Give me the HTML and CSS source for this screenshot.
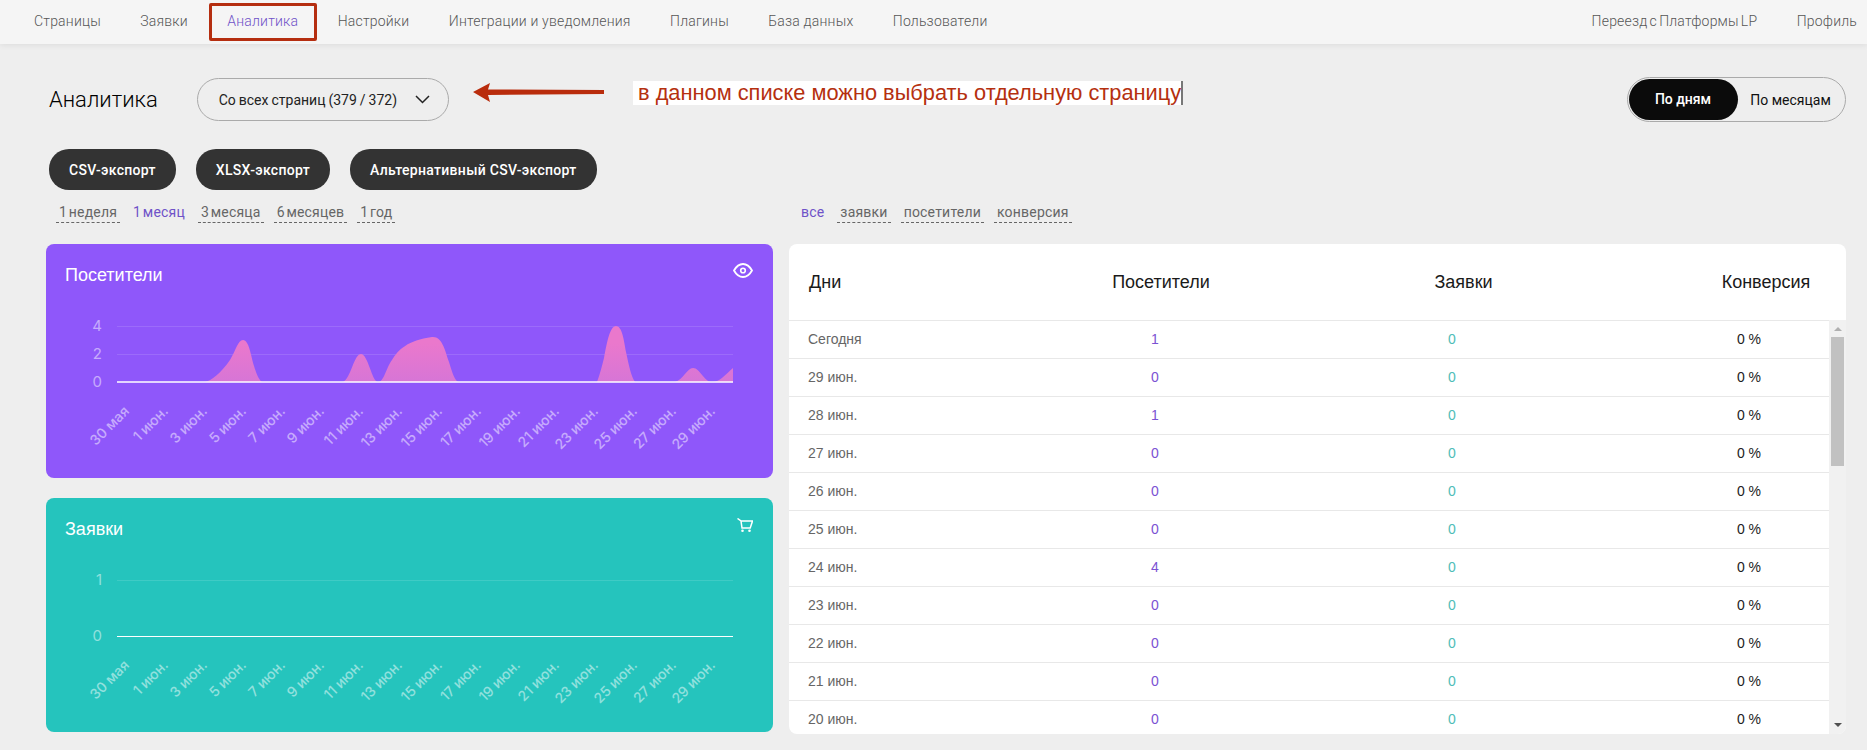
FILE: index.html
```html
<!DOCTYPE html>
<html lang="ru">
  <head>
    <meta charset="UTF-8" />
    <meta name="viewport" content="width=device-width, initial-scale=1.0" />
    <title>Аналитика</title>
    <link rel="stylesheet" href="styles.css">
  </head>
  <body>
    <nav class="nav">
      <a class="nav-item">Страницы</a>
      <a class="nav-item">Заявки</a>
      <a class="nav-item nav-active">Аналитика</a>
      <a class="nav-item">Настройки</a>
      <a class="nav-item">Интеграции и уведомления</a>
      <a class="nav-item">Плагины</a>
      <a class="nav-item">База данных</a>
      <a class="nav-item">Пользователи</a>
      <a class="nav-item nav-right">Переезд с Платформы LP</a>
      <a class="nav-item">Профиль</a>
    </nav>

    <main class="main">
      <div class="toolbar">
        <h1 class="page-title">Аналитика</h1>
        <div class="page-select">
          Со всех страниц (379 / 372)
          <svg class="chevron" width="15" height="9" viewBox="0 0 15 9">
            <path d="M1 1l6.500 6.500L14 1" fill="none" stroke="#222" stroke-width="1.500" />
          </svg>
        </div>
        <div class="toggle">
          <span class="toggle-item toggle-on">По дням</span>
          <span class="toggle-item">По месяцам</span>
        </div>
      </div>

      <div class="exports">
        <button type="button" class="export-button">CSV-экспорт</button>
        <button type="button" class="export-button">XLSX-экспорт</button>
        <button type="button" class="export-button">Альтернативный CSV-экспорт</button>
      </div>

      <div class="filters">
        <div class="filter-group periods">
          <a class="filter">1 неделя</a>
          <a class="filter filter-on">1 месяц</a>
          <a class="filter">3 месяца</a>
          <a class="filter">6 месяцев</a>
          <a class="filter">1 год</a>
        </div>
        <div class="filter-group columns">
          <a class="filter filter-on">все</a>
          <a class="filter">заявки</a>
          <a class="filter">посетители</a>
          <a class="filter">конверсия</a>
        </div>
      </div>

      <div class="content">
        <div class="charts">
          <section class="card card-purple">
            <header class="card-head">
              <h2 class="card-title">Посетители</h2>
              <svg class="eye-icon" width="20" height="15" viewBox="0 0 20 15">
                <path d="M1 7.500C3.500 3 6.500 1 10 1s6.500 2 9 6.500C16.500 12 13.500 14 10 14S3.500 12 1 7.500z" fill="none" stroke="#fff" stroke-width="1.800" />
                <circle cx="10" cy="7.500" r="2.300" fill="none" stroke="#fff" stroke-width="1.600" />
              </svg>
            </header>
            <svg class="chart" width="727" height="172" viewBox="0 0 727 172">
              <defs>
                <linearGradient id="pinkFill" x1="0" y1="20" x2="0" y2="76" gradientUnits="userSpaceOnUse">
                  <stop offset="0.300" stop-color="#ea78cc" />
                  <stop offset="1" stop-color="#d775d6" />
                </linearGradient>
              </defs>
              <line class="grid-line" x1="71" y1="20.500" x2="687" y2="20.500" />
              <line class="grid-line" x1="71" y1="48.500" x2="687" y2="48.500" />
              <path fill="url(#pinkFill)" d="M159 76C165 75 175 67 184 54C190 44 192 34 197 34C203 34 205 50 208 60C211 70 214 76 217 76Z" />
              <path fill="url(#pinkFill)" d="M297 76C305 72 308 48 315 48C322 48 326 76 332 76C338 76 340 62 346 54C352 44 362 34 386 31C396 30 399 44 403 56C406 66 409 76 413 76Z" />
              <path fill="url(#pinkFill)" d="M551 76C554 68 556 60 558 52C561 36 564 20 570 20C576 20 578 34 580 46C583 60 585 70 589 76Z" />
              <path fill="url(#pinkFill)" d="M629 76C637 74 641 62 647 62C654 62 658 76 666 76C674 76 680 68 687 62V76Z" />
              <line class="zero-line" x1="71" y1="76" x2="687" y2="76" />
              <text class="y-label" x="56" y="25">4</text>
              <text class="y-label" x="56" y="53">2</text>
              <text class="y-label" x="56" y="81">0</text>
              <text class="x-label" transform="translate(84 106) rotate(-45)">30 мая</text>
              <text class="x-label" transform="translate(123 106) rotate(-45)">1 июн.</text>
              <text class="x-label" transform="translate(162 106) rotate(-45)">3 июн.</text>
              <text class="x-label" transform="translate(201 106) rotate(-45)">5 июн.</text>
              <text class="x-label" transform="translate(240 106) rotate(-45)">7 июн.</text>
              <text class="x-label" transform="translate(279 106) rotate(-45)">9 июн.</text>
              <text class="x-label" transform="translate(318 106) rotate(-45)">11 июн.</text>
              <text class="x-label" transform="translate(357 106) rotate(-45)">13 июн.</text>
              <text class="x-label" transform="translate(397 106) rotate(-45)">15 июн.</text>
              <text class="x-label" transform="translate(436 106) rotate(-45)">17 июн.</text>
              <text class="x-label" transform="translate(475 106) rotate(-45)">19 июн.</text>
              <text class="x-label" transform="translate(514 106) rotate(-45)">21 июн.</text>
              <text class="x-label" transform="translate(553 106) rotate(-45)">23 июн.</text>
              <text class="x-label" transform="translate(592 106) rotate(-45)">25 июн.</text>
              <text class="x-label" transform="translate(631 106) rotate(-45)">27 июн.</text>
              <text class="x-label" transform="translate(670 106) rotate(-45)">29 июн.</text>
            </svg>
          </section>

          <section class="card card-teal">
            <header class="card-head">
              <h2 class="card-title">Заявки</h2>
              <svg class="cart-icon" width="16" height="14" viewBox="0 0 16 14">
                <path d="M0.500 0.500L4 3L5 10H13.200L15.500 3H4" fill="none" stroke="#fff" stroke-width="1.500" />
                <circle cx="5.500" cy="12.700" r="1.300" fill="#fff" />
                <circle cx="12.500" cy="12.700" r="1.300" fill="#fff" />
              </svg>
            </header>
            <svg class="chart" width="727" height="172" viewBox="0 0 727 172">
              <line class="grid-line" x1="71" y1="20.500" x2="687" y2="20.500" />
              <line class="zero-line thin" x1="71" y1="76.500" x2="687" y2="76.500" />
              <text class="y-label" x="56" y="25">1</text>
              <text class="y-label" x="56" y="81">0</text>
              <text class="x-label" transform="translate(84 106) rotate(-45)">30 мая</text>
              <text class="x-label" transform="translate(123 106) rotate(-45)">1 июн.</text>
              <text class="x-label" transform="translate(162 106) rotate(-45)">3 июн.</text>
              <text class="x-label" transform="translate(201 106) rotate(-45)">5 июн.</text>
              <text class="x-label" transform="translate(240 106) rotate(-45)">7 июн.</text>
              <text class="x-label" transform="translate(279 106) rotate(-45)">9 июн.</text>
              <text class="x-label" transform="translate(318 106) rotate(-45)">11 июн.</text>
              <text class="x-label" transform="translate(357 106) rotate(-45)">13 июн.</text>
              <text class="x-label" transform="translate(397 106) rotate(-45)">15 июн.</text>
              <text class="x-label" transform="translate(436 106) rotate(-45)">17 июн.</text>
              <text class="x-label" transform="translate(475 106) rotate(-45)">19 июн.</text>
              <text class="x-label" transform="translate(514 106) rotate(-45)">21 июн.</text>
              <text class="x-label" transform="translate(553 106) rotate(-45)">23 июн.</text>
              <text class="x-label" transform="translate(592 106) rotate(-45)">25 июн.</text>
              <text class="x-label" transform="translate(631 106) rotate(-45)">27 июн.</text>
              <text class="x-label" transform="translate(670 106) rotate(-45)">29 июн.</text>
            </svg>
          </section>
        </div>

        <section class="stats">
          <div class="stats-head">
            <span class="stats-day">Дни</span>
            <span>Посетители</span>
            <span>Заявки</span>
            <span>Конверсия</span>
          </div>
          <div class="stats-body">
            <div class="stats-rows">
              <div class="row"><span class="day">Сегодня</span><span class="visits">1</span><span class="orders">0</span><span class="rate">0 %</span></div>
              <div class="row"><span class="day">29 июн.</span><span class="visits">0</span><span class="orders">0</span><span class="rate">0 %</span></div>
              <div class="row"><span class="day">28 июн.</span><span class="visits">1</span><span class="orders">0</span><span class="rate">0 %</span></div>
              <div class="row"><span class="day">27 июн.</span><span class="visits">0</span><span class="orders">0</span><span class="rate">0 %</span></div>
              <div class="row"><span class="day">26 июн.</span><span class="visits">0</span><span class="orders">0</span><span class="rate">0 %</span></div>
              <div class="row"><span class="day">25 июн.</span><span class="visits">0</span><span class="orders">0</span><span class="rate">0 %</span></div>
              <div class="row"><span class="day">24 июн.</span><span class="visits">4</span><span class="orders">0</span><span class="rate">0 %</span></div>
              <div class="row"><span class="day">23 июн.</span><span class="visits">0</span><span class="orders">0</span><span class="rate">0 %</span></div>
              <div class="row"><span class="day">22 июн.</span><span class="visits">0</span><span class="orders">0</span><span class="rate">0 %</span></div>
              <div class="row"><span class="day">21 июн.</span><span class="visits">0</span><span class="orders">0</span><span class="rate">0 %</span></div>
              <div class="row"><span class="day">20 июн.</span><span class="visits">0</span><span class="orders">0</span><span class="rate">0 %</span></div>
            </div>
            <div class="scrollbar">
              <span class="scroll-up"></span>
              <span class="scroll-thumb"></span>
              <span class="scroll-down"></span>
            </div>
          </div>
        </section>
      </div>
    </main>

    <!-- annotation drawn over the screenshot -->
    <div class="note">
      <svg width="131" height="20" viewBox="0 0 131 20">
        <path d="M0 10L17 1L15 7.500L131 8V12L15 13L17 20Z" fill="#b92c0c" />
      </svg>
      <span class="note-text">в данном списке можно выбрать отдельную страницу</span>
    </div>
  </body>
</html>
```

FILE: styles.css
```css
body {
  margin: 0;
  height: 750px;
  overflow: hidden;
  position: relative;
  background-color: #eeeeee;
  font-family: Roboto, sans-serif;
  font-size: 14px;
  color: #333;
}
.nav {
  display: flex;
  gap: 39.4px;
  height: 44px;
  padding: 0 10px 0 34px;
  background-color: #f5f5f5;
  box-shadow: 0 1px 6px rgba(0, 0, 0, 0.08);
}
.nav-item {
  position: relative;
  line-height: 42px;
  font-weight: 300;
  letter-spacing: 0.2px;
  color: #555;
}
.nav-right {
  margin-left: auto;
  word-spacing: -1.5px;
}
.nav-active {
  color: #6f52c8;
}
.nav-active::after {
  content: "";
  position: absolute;
  top: 3px;
  left: -18px;
  right: -19px;
  height: 32px;
  border: 3px solid #b52e10;
  border-radius: 2px;
}
.main {
  padding: 33px 21px 0 46px;
}
.toolbar {
  display: flex;
  align-items: center;
  height: 45px;
  padding-left: 3px;
}
.page-title {
  margin: 0 39px 0 0;
  font-size: 22px;
  font-weight: 300;
  color: #000;
}
.page-select {
  display: flex;
  align-items: center;
  box-sizing: border-box;
  width: 252px;
  height: 43px;
  padding: 0 18px 0 21px;
  justify-content: space-between;
  border: 1px solid #aaa;
  border-radius: 22px;
  word-spacing: -0.5px;
  color: #222;
}
.toggle {
  display: flex;
  align-items: center;
  box-sizing: border-box;
  width: 219px;
  height: 45px;
  margin-left: auto;
  padding: 0 1px;
  border: 1px solid #aaa;
  border-radius: 23px;
  color: #111;
}
.toggle-item {
  flex: 1;
  text-align: center;
  padding-right: 1px;
}
.toggle-on {
  flex: 0 0 108px;
  height: 41px;
  line-height: 41px;
  border-radius: 21px;
  background-color: #0b0b0b;
  color: white;
  font-weight: 500;
}
.exports {
  display: flex;
  gap: 20px;
  margin: 27px 0 0 3px;
}
.export-button {
  height: 41px;
  padding: 0 20px;
  border: none;
  border-radius: 20px;
  background-color: #333;
  color: white;
  font-family: Roboto, sans-serif;
  font-size: 14px;
  font-weight: 500;
  letter-spacing: 0.3px;
}
.filters {
  display: grid;
  grid-template-columns: 727px 1057px;
  column-gap: 16px;
  margin-top: 12px;
}
.filter-group {
  display: flex;
  gap: 10px;
}
.periods {
  padding-left: 10px;
}
.columns {
  padding-left: 9px;
}
.filter {
  padding: 0 3px;
  line-height: 20px;
  border-bottom: 1px dashed #666;
  letter-spacing: 0.2px;
  word-spacing: -2px;
  color: #666;
}
.filter-on {
  border-bottom-color: transparent;
  color: #6f52c8;
}
.content {
  display: grid;
  grid-template-columns: 727px 1057px;
  column-gap: 16px;
  margin-top: 21px;
}
.charts {
  display: flex;
  flex-direction: column;
  gap: 20px;
}
.card {
  height: 234px;
  border-radius: 8px;
  color: white;
}
.card-purple {
  background-color: #8f57fa;
}
.card-teal {
  background-color: #25c4bd;
}
.card-head {
  display: flex;
  justify-content: space-between;
  box-sizing: border-box;
  height: 62px;
  padding: 21px 20px 0 19px;
}
.card-title {
  margin: 0;
  font-family: "Liberation Sans", sans-serif;
  font-size: 18px;
  font-weight: 400;
  line-height: 20px;
}
.eye-icon {
  margin-top: -2px;
}
.cart-icon {
  margin-top: -1px;
}
.chart {
  display: block;
}
.grid-line {
  stroke: rgba(255, 255, 255, 0.12);
  stroke-width: 1;
}
.zero-line {
  stroke: white;
  stroke-width: 1.5;
}
.zero-line.thin {
  stroke-width: 1;
}
.y-label,
.x-label {
  font-family: Inter, sans-serif;
  fill: rgba(255, 255, 255, 0.5);
  text-anchor: end;
}
.y-label {
  font-size: 15px;
}
.x-label {
  font-size: 14px;
  font-weight: 500;
}
.stats {
  display: flex;
  flex-direction: column;
  height: 490px;
  overflow: hidden;
  border-radius: 8px;
  background-color: white;
  font-family: "Liberation Sans", sans-serif;
}
.stats-head {
  display: grid;
  grid-template-columns: 1fr repeat(3, 160px);
  column-gap: 142.5px;
  align-items: center;
  box-sizing: border-box;
  flex: 0 0 76px;
  padding: 1px 0 0 20px;
  font-size: 18px;
  color: #1a1a1a;
  text-align: center;
}
.stats-day {
  text-align: left;
}
.stats-body {
  display: flex;
  flex: 1;
  min-height: 0;
}
.stats-rows {
  flex: 1;
  overflow: hidden;
}
.row {
  display: grid;
  grid-template-columns: 1fr repeat(3, 160px);
  column-gap: 137px;
  align-items: center;
  box-sizing: border-box;
  height: 38px;
  padding: 0 0 2px 19px;
  border-top: 1px solid #e8e8e8;
  text-align: center;
}
.day {
  text-align: left;
  color: #666;
}
.visits {
  color: #7b52d3;
}
.orders {
  color: #4fbdb8;
}
.rate {
  color: #222;
}
.scrollbar {
  display: flex;
  flex-direction: column;
  align-items: center;
  flex: 0 0 17px;
  background-color: #f1f1f1;
}
.scroll-up {
  margin-top: 7px;
  border: 4px solid transparent;
  border-top: none;
  border-bottom: 4px solid #b0b0b0;
}
.scroll-thumb {
  width: 13px;
  height: 129px;
  margin-top: 6px;
  background-color: #c1c1c1;
}
.scroll-down {
  margin-top: auto;
  margin-bottom: 7px;
  border: 4px solid transparent;
  border-bottom: none;
  border-top: 4px solid #505050;
}
.note {
  position: absolute;
  top: 81px;
  left: 473px;
  display: flex;
  align-items: center;
  gap: 29px;
}
.note svg {
  margin-top: -2px;
}
.note-text {
  padding: 0 0 0 5px;
  height: 24px;
  line-height: 24px;
  background-color: white;
  border-right: 2px solid #777;
  font-family: "Liberation Sans", sans-serif;
  font-size: 21.8px;
  color: #b5300f;
  white-space: nowrap;
}
```
